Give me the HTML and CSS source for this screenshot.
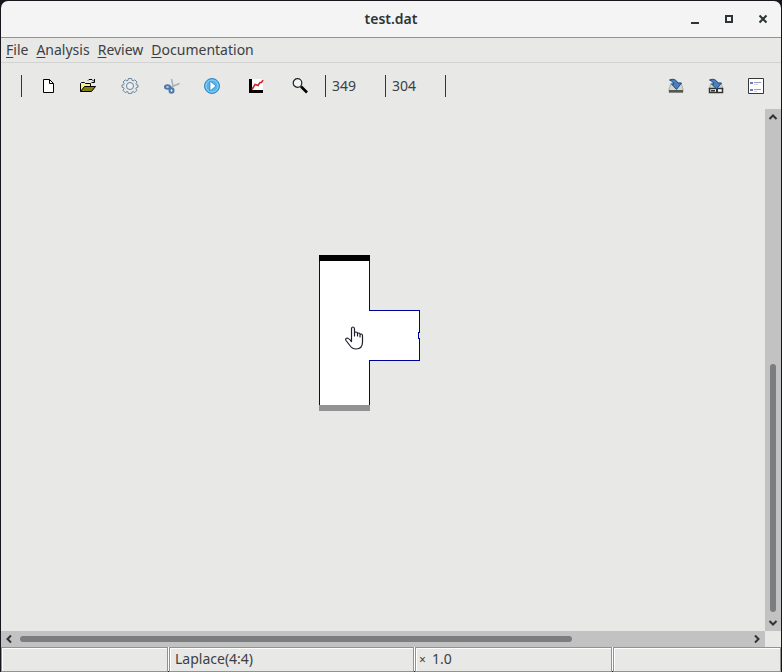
FILE: index.html
```html
<!DOCTYPE html>
<html lang="en">
<head>
<meta charset="utf-8">
<title>test.dat</title>
<link rel="stylesheet" href="styles.css">
</head>
<body>
<div class="window">
  <header class="titlebar">
    <h1 class="title">test.dat</h1>
    <div class="window-controls">
      <button aria-label="Minimize"><svg width="10" height="10"><path d="M1 8h8v2H1z"/></svg></button>
      <button aria-label="Maximize"><svg width="10" height="10"><path d="M2 2h6v6H2z" fill="none" stroke="#2e3436" stroke-width="2"/></svg></button>
      <button aria-label="Close"><svg width="10" height="10"><path d="M1.500 1.500l7 7M8.500 1.500l-7 7" fill="none" stroke="#2e3436" stroke-width="2"/></svg></button>
    </div>
  </header>
  <nav class="menubar">
    <button><u>F</u>ile</button>
    <button><u>A</u>nalysis</button>
    <button><u>R</u>eview</button>
    <button><u>D</u>ocumentation</button>
  </nav>
  <div class="toolbar">
    <span class="divider"></span>
    <div class="tools">
      <button aria-label="New"><svg width="16" height="16"><path d="M3.500 1.500h6l4 4v9h-10z" fill="#fff" stroke="#000"/><path d="M9.500 1.500v4h4" fill="none" stroke="#000"/></svg></button>
      <button aria-label="Open"><svg width="16" height="16"><path d="M.5 13.500v-8l1-1h3l1 1h5v3" fill="#f4f08a" stroke="#000"/><path d="M.5 13.500l4-5h11l-4 5z" fill="#827f10" stroke="#000"/><path d="M8 2.500l1-1h3l2 2M14.500 1v3.500H11.500" fill="none" stroke="#000"/></svg></button>
      <button aria-label="Settings"><svg width="20" height="16" viewBox="-10 -8 20 16"><g fill="#e2e8ec" stroke="#6a8598"><path d="M-1.600-7.500h3.200l.5 1.900 1.100.4 1.600-1 2.200 2.200-1 1.600.4 1.100 1.600.3v2.200l-1.600.4-.5 1.100 1 1.700-2.200 2.200-1.600-1-1.100.4-.4 1.600h-3.200l-.4-1.600-1.100-.4-1.700 1-2.200-2.200 1-1.700-.4-1.100-1.600-.4v-2.200l1.600-.3.5-1.100-1-1.600 2.200-2.200 1.600 1 1.100-.4z"/><circle r="3.500" fill="#eeefee"/></g></svg></button>
      <button aria-label="Cut"><svg width="16" height="16"><path d="M7.500 1l1.500 7-2 2M15.500 5.500L6 9.500" fill="none" stroke="#a3b1b9" stroke-width="1.500"/><ellipse cx="3.500" cy="9" rx="2.500" ry="1.800" fill="none" stroke="#4a79ad" stroke-width="2"/><ellipse cx="7.500" cy="12.500" rx="2" ry="2.300" fill="none" stroke="#4a79ad" stroke-width="2"/></svg></button>
      <button aria-label="Run"><svg width="16" height="16"><circle cx="8" cy="8" r="7.500" fill="#53b3eb" stroke="#3186c4"/><circle cx="8" cy="8" r="6" fill="none" stroke="#8ed4f6"/><path d="M6 3v10l6-5z" fill="#fff" stroke="#277db9" stroke-width=".7"/></svg></button>
      <button aria-label="Plot"><svg width="24" height="16"><path d="M5 1h14v14H5z" fill="#fff"/><path d="M5 1h3v11h11v3H5z"/><path d="M8 11.500l3-5 3 1 2-3h1.500L19 2" fill="none" stroke="#c92727" stroke-width="1.500"/></svg></button>
      <button aria-label="Zoom"><svg width="16" height="16"><circle cx="5.500" cy="5" r="4.300" fill="#f1f5f5" stroke="#222" stroke-width="1.200"/><path d="M9 8.500l6 6" stroke="#000" stroke-width="2.600"/></svg></button>
    </div>
    <span class="divider"></span>
    <output class="coordinate">349</output>
    <span class="divider"></span>
    <output class="coordinate">304</output>
    <span class="divider"></span>
    <div class="tools tools-end">
      <button aria-label="Save"><svg width="16" height="16"><path d="M3 5h10l2 6v3.500H1V11z" fill="#d3d5d1" stroke="#aeb1ab"/><path d="M1 12h14v2.500H1z" fill="#555753"/><path d="M1.500 2Q7-.5 10 5h3.500L8.500 11.500 3.500 6H6Q5 3 1.500 2z" fill="#4a80bb" stroke="#204a87"/></svg></button>
      <button aria-label="Save as"><svg width="16" height="16"><path d="M3 5h10l2 6H1z" fill="#d3d5d1" stroke="#aeb1ab"/><path d="M1.500 10.500h13v4h-13z" fill="#fff" stroke="#30332f" stroke-width="1.500"/><path d="M3 12h4v1.500H3zM8 10h2v5H8z" fill="#30332f"/><path d="M1.500 2Q7-.5 10 5h3.500L8.500 11 3.500 6H6Q5 3 1.500 2z" fill="#4a80bb" stroke="#204a87"/></svg></button>
      <button aria-label="Properties"><svg width="16" height="16"><path d="M.5.5h15v15H.5z" fill="#fff" stroke="#35393a"/><path d="M6 4.500h7M6 11.500h7" stroke="#9299bb"/><path d="M6 6.500h4M6 13.500h3" stroke="#d0d3dc"/><path d="M2 4h3v2H2zM2 11h3v2H2z" fill="#6c77cf"/></svg></button>
    </div>
  </div>
  <main class="workspace">
    <div class="canvas">
      <svg class="model" width="102" height="156" role="img" aria-label="Model geometry">
        <path d="M.5 3V153H50.500V105.500H100.500V83H99.500V77H100.500V55.500H50.500V3" fill="#fff" stroke="#00009c" shape-rendering="crispEdges"/>
        <path d="M0 0h51v6H0z"/>
        <path d="M0 150h51v6H0z" fill="#929292"/>
      </svg>
      <svg class="pointer" width="20" height="26" aria-hidden="true"><path d="M6.500 14V3q0-2 1.500-2t1.500 2v7V7.500q0-1.500 1.500-1.500T12.500 7.500V10 8q0-1 1.300-1T15 8.500V11 9q0-1 1.200-1t1.300 1.500V16q0 7-6.500 7-4 0-6.500-4L1 14.500Q0 12.500 2 12q1.500 0 4.500 3.500z" fill="#fff" stroke="#1d1d2b" stroke-width="1.200" stroke-linejoin="round"/></svg>
    </div>
    <div class="scrollbar vertical">
      <button aria-label="Scroll up"><svg width="10" height="10"><path d="M1.500 7L5 3.500 8.500 7"/></svg></button>
      <div class="track"><div class="thumb"></div></div>
      <button aria-label="Scroll down"><svg width="10" height="10"><path d="M1.500 3L5 6.500 8.500 3"/></svg></button>
    </div>
    <div class="scrollbar horizontal">
      <button aria-label="Scroll left"><svg width="10" height="10"><path d="M7 1.500L3.500 5 7 8.500"/></svg></button>
      <div class="track"><div class="thumb"></div></div>
      <button aria-label="Scroll right"><svg width="10" height="10"><path d="M3 1.500L6.500 5 3 8.500"/></svg></button>
    </div>
  </main>
  <footer class="statusbar">
    <span></span>
    <span>Laplace(4:4)</span>
    <span><small>×</small>1.0</span>
    <span></span>
  </footer>
</div>
</body>
</html>
```
FILE: styles.css
```css
* { box-sizing: border-box; }

body {
  margin: 0;
  background: #16161c;
  color: #3c4043;
  font: 14px/22px "Noto Sans", sans-serif;
}

button {
  display: flex;
  align-items: center;
  justify-content: center;
  padding: 0;
  border: 0;
  background: none;
  color: inherit;
  font: inherit;
}

svg { display: block; flex: none; }

.window {
  display: flex;
  flex-direction: column;
  min-height: 100vh;
  padding: 1px;
}

.titlebar {
  display: grid;
  grid-template-columns: 1fr auto 1fr;
  align-items: center;
  height: 37px;
  background: #f4f4f4;
  border-bottom: 1px solid #929292;
  border-radius: 7px 7px 0 0;
}

.title {
  grid-column: 2;
  margin: 0;
  color: #2e3436;
  font-size: 14px;
  font-weight: 600;
}

.window-controls {
  display: flex;
  justify-self: end;
  padding-right: 1px;
  fill: #2e3436;
}

.window-controls button { width: 34px; height: 34px; }

.menubar {
  display: flex;
  gap: 8px;
  height: 25px;
  padding: 0 5px;
  background: #e8e8e6;
  border-bottom: 1px solid #d2d2d0;
}

.menubar button { display: block; }

.menubar u { text-underline-offset: 2px; }

.toolbar {
  display: flex;
  align-items: center;
  height: 46px;
  padding: 0 5px 0 20px;
  background: #e8e8e6;
}

.divider { width: 1px; height: 22px; background: #33373a; }

.tools { display: flex; margin: 0 5px 0 6px; }

.tools button { height: 32px; padding: 0 12px; }

.tools-end { margin: 0 0 0 auto; }

.coordinate { width: 59px; padding-left: 6px; }

.workspace {
  display: grid;
  flex: 1;
  grid-template: 1fr 16px / 1fr 16px;
  background: #e8e8e6;
}

.canvas { position: relative; overflow: hidden; }

.model { position: absolute; left: 318px; top: 146px; }

.pointer { position: absolute; left: 344px; top: 217px; }

.scrollbar {
  display: flex;
  background: #c2c2c2;
  fill: none;
  stroke: #2e3436;
  stroke-width: 2;
}

.scrollbar button { width: 16px; height: 16px; }

.vertical { flex-direction: column; align-items: center; }

.horizontal { align-items: center; }

.track { display: flex; flex: 1; }

.thumb { background: #7b7d7e; border-radius: 3px; }

.vertical .track { padding-bottom: 3px; }

.vertical .thumb {
  align-self: flex-end;
  width: 6px;
  height: 51%;
}

.horizontal .track { padding: 0 3px; }

.horizontal .thumb { width: 76%; height: 6px; }

.statusbar {
  display: grid;
  grid-template-columns: 167fr 245fr 197fr 168fr;
  gap: 1px;
  height: 24px;
  padding-bottom: 1px;
  background: #fff;
}

.statusbar span {
  padding: 0 5px;
  background: #e8e8e6;
  border: 1px solid #929292;
  box-shadow: inset 1px 1px #fff;
}

.statusbar small { margin-right: 6px; margin-left: -2px; font-size: 12px; }
```
